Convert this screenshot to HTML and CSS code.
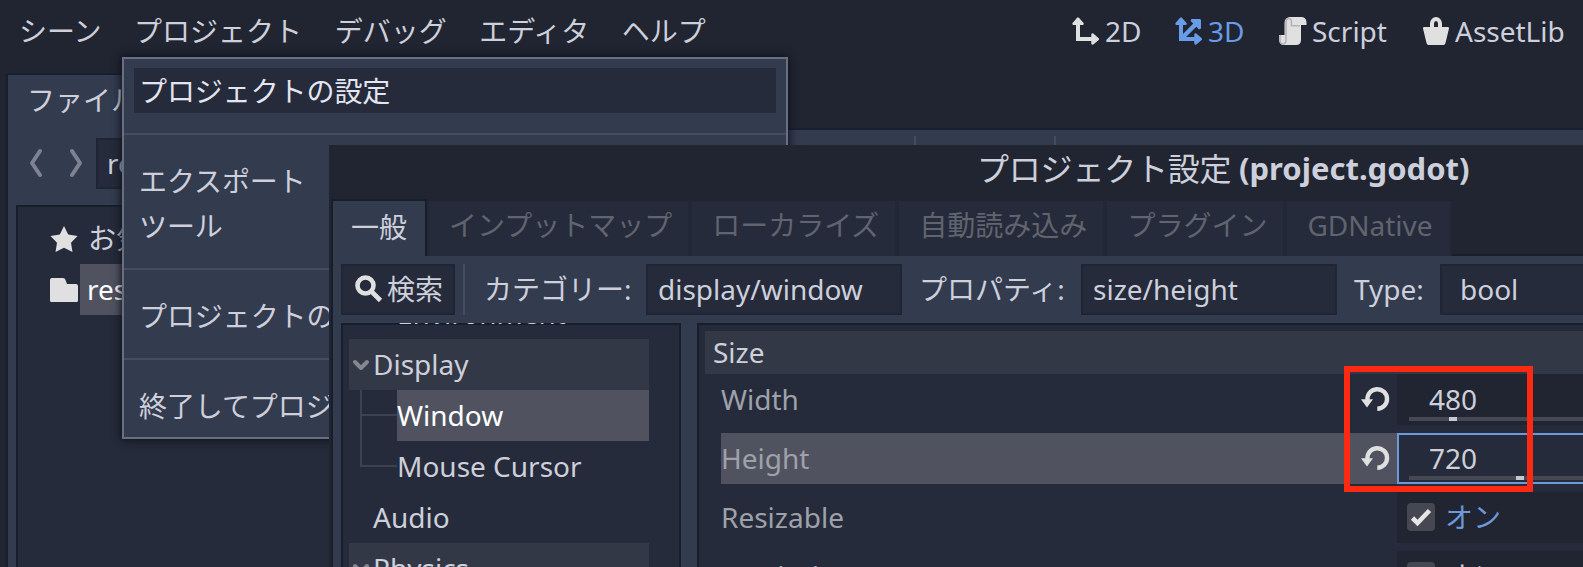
FILE: index.html
```html
<!DOCTYPE html>
<html lang="ja">
<head>
<meta charset="utf-8">
<title>プロジェクト設定</title>
<link rel="stylesheet" href="styles.css">
</head>
<body>
<div class="editor">
  <header class="topbar">
    <nav class="menus">
      <span>シーン</span><span>プロジェクト</span><span>デバッグ</span><span>エディタ</span><span>ヘルプ</span>
    </nav>
    <nav class="modes">
      <span class="mode mode-2d"><svg class="icon" viewBox="0 0 28 28"><path d="M4 8H0.8L0.3 6.3L5.3 0.6H6.7L11.8 6.3L11.3 8H8V20H19.3V16.8L21 16.3L27 21.5V22.8L21 27.7L19.3 27.2V24H4z"/></svg>2D</span>
      <span class="mode mode-3d"><svg class="icon" viewBox="0 0 28 28"><path d="M4 8H0.8L0.3 6.3L5.3 0.6H6.7L11.8 6.3L11.3 8H8V17L18.3 6.6L15.6 4L16.4 2H25L26 3V11.6L24 12.4L21.3 9.7L11 20H19.3V16.8L21 16.3L27 21.5V22.8L21 27.7L19.3 27.2V24H4z"/></svg>3D</span>
      <span class="mode mode-script"><svg class="icon" viewBox="0 0 28 28"><path d="M10.500 0H22Q27 0 27.500 5V8H22V23Q22 28 17 28H4Q0 27 0 22V18H5.500V6Q5.500 1 10.500 0z"/><path class="fold" d="M7 18V6Q7 1.500 10 1.500Q12.500 1.500 12.500 6V8.700H21M1 18V23Q1 27 4 27Q7 27 7 23V17"/></svg>Script</span>
      <span class="mode mode-assets"><svg class="icon" viewBox="0 0 28 28"><path fill-rule="evenodd" d="M8 10V6.500A6 6.500 0 0 1 20 6.500V10H26Q27.300 10 27 11.500L23.500 26Q23 28 21.500 28H6.500Q5 28 4.500 26L1 11.500Q.7 10 2 10zM12 10H16V6.500A2 2.500 0 0 0 12 6.500z"/></svg>AssetLib</span>
    </nav>
  </header>

  <div class="workspace">
    <aside class="dock">
      <div class="dock-tab">ファイルシステム</div>
      <div class="path-row">
        <svg class="arrows" viewBox="0 0 54 30"><path d="M11 3L3 15L11 27M43 3L51 15L43 27"/></svg>
        <div class="path-field">res://</div>
      </div>
      <div class="file-tree">
        <div class="file"><svg class="icon" viewBox="0 0 28 28"><path d="M14 1L18.200 9.500L27.500 11L21 17.800L22.500 27L14 22.800L5.500 27L7 17.800L.5 11L9.800 9.500z"/></svg><span class="file-name">お気に入り:</span></div>
        <div class="file"><svg class="icon" viewBox="0 0 28 28"><path d="M0 4Q0 2 2 2H13Q15 2 15.500 4L17 8H26Q28 8 28 10V24.500Q28 26 26.500 26H1.500Q0 26 0 24.500z"/></svg><span class="file-name picked">res://</span></div>
      </div>
    </aside>
    <section class="viewport"><i></i><i></i></section>
  </div>

  <div class="popup">
    <div class="item hover">プロジェクトの設定</div>
    <div class="rule"></div>
    <div class="item">エクスポート</div>
    <div class="item">ツール</div>
    <div class="rule"></div>
    <div class="item">プロジェクトのデータ</div>
    <div class="rule"></div>
    <div class="item">終了してプロジェクト</div>
  </div>

  <main class="dialog">
    <h1 class="title"><span class="title-jp">プロジェクト設定</span><span class="title-file">(project.godot)</span></h1>
    <div class="tabs">
      <span class="tab active">一般</span><span class="tab">インプットマップ</span><span class="tab">ローカライズ</span><span class="tab">自動読み込み</span><span class="tab">プラグイン</span><span class="tab tab-latin">GDNative</span><span class="tab-rest"></span>
    </div>
    <div class="sheet">
      <div class="toolbar">
        <div class="field search"><svg class="icon" viewBox="0 0 28 28"><circle cx="10.500" cy="10.500" r="8"/><path d="M16.500 16.500L25.500 25.500"/></svg>検索</div>
        <div class="divider"></div>
        <span class="caption cap-category">カテゴリー:</span>
        <div class="field entry">display/window</div>
        <span class="caption cap-property">プロパティ:</span>
        <div class="field entry">size/height</div>
        <span class="caption cap-type">Type:</span>
        <div class="field select">bool</div>
      </div>
      <div class="panes">
        <div class="pane sections">
          <div class="row leaf">Environment</div>
          <div class="row group"><svg class="chevron" viewBox="0 0 16 10"><path d="M2 2L8 8L14 2"/></svg>Display</div>
          <div class="children">
            <div class="guides"><i></i><i></i></div>
            <div class="leaves"><div class="row current">Window</div><div class="row">Mouse Cursor</div></div>
          </div>
          <div class="row top">Audio</div>
          <div class="row group"><svg class="chevron" viewBox="0 0 16 10"><path d="M2 2L8 8L14 2"/></svg>Physics</div>
        </div>
        <div class="pane inspector">
          <div class="heading">Size</div>
          <div class="property">
            <span class="label">Width</span>
            <svg class="revert" viewBox="0 0 28 25"><path class="arc" d="M6.500 13A9.800 9.800 0 1 1 16.300 21.800"/><path d="M0 12.200H12L6 20.400z"/></svg>
            <div class="value number">480<div class="track"><i style="left:40px"></i></div></div>
          </div>
          <div class="property lit">
            <span class="label">Height</span>
            <svg class="revert" viewBox="0 0 28 25"><path class="arc" d="M6.500 13A9.800 9.800 0 1 1 16.300 21.800"/><path d="M0 12.200H12L6 20.400z"/></svg>
            <div class="value number focus">720<div class="track"><i style="left:107px"></i></div></div>
          </div>
          <div class="property">
            <span class="label">Resizable</span>
            <div class="value toggle on"><svg class="check" viewBox="0 0 28 28"><path d="M5.500 15L10.500 20L22.500 7.500"/></svg>オン</div>
          </div>
          <div class="property">
            <span class="label">Borderless</span>
            <div class="value toggle"><svg class="check" viewBox="0 0 28 28"></svg>オン</div>
          </div>
        </div>
      </div>
    </div>
  </main>

  <div class="marker"></div>
</div>
</body>
</html>
```

FILE: styles.css
```css
* { box-sizing: border-box; }
body { margin: 0; background: #202531; }
.editor {
  position: relative; width: 1583px; height: 567px; overflow: hidden;
  display: flex; flex-direction: column;
  background: #202531; color: #cdcfdb;
  font: 28px/45px "Noto Sans", "Noto Sans CJK JP", sans-serif;
  white-space: nowrap;
}
svg { display: block; flex: none; overflow: visible; }
.icon { width: 28px; height: 28px; fill: #e0e0e0; }

.topbar { display: flex; justify-content: space-between; height: 73px; padding: 9px 0 0 19px; }
.menus { display: flex; gap: 32.500px; }
.modes { display: flex; width: 511px; }
.mode { display: flex; flex: none; gap: 5px; height: 45px; }
.mode .icon { margin-top: 8px; }
.mode-2d { width: 103px; }
.mode-3d { width: 104px; color: #699ce8; }
.mode-3d .icon { fill: #699ce8; }
.mode-script { width: 143px; }
.mode-assets { width: 145px; }
.fold { fill: none; stroke: #b4b4b6; stroke-width: 1.6; }

.workspace { display: flex; flex: 1; padding-left: 6px; }
.dock {
  display: flex; flex-direction: column; width: 400px; flex: none;
  background: #333b4f; border: 2px solid #1a1f2d; border-bottom: 0;
  padding-left: 8px;
}
.dock-tab { height: 63px; padding: 3px 0 0 11px; }
.path-row { display: flex; height: 67px; padding-left: 13px; }
.arrows { width: 54px; height: 30px; margin: 10px 13px 0 0; fill: none; stroke: #7d8393; stroke-width: 4; stroke-linecap: round; stroke-linejoin: round; }
.path-field { flex: 1; height: 51px; line-height: 47px; background: #252b3a; border: 2px solid #1f2533; padding-left: 9px; }
.file-tree { flex: 1; background: #252b3a; border: 2px solid #191e2b; border-bottom: 0; padding: 6px 0 0 32px; }
.file { display: flex; align-items: center; height: 51px; }
.file-name { width: 290px; padding-left: 10px; line-height: 51px; }
.picked { margin-left: 2px; padding-left: 7px; background: #50535f; color: #fff; }
.viewport {
  display: flex; flex: 1; margin-top: 55px; padding: 6px 0 0 508px; gap: 138px;
  background: #333b4f; border-top: 2px solid #1a1f2d;
}
.viewport i { flex: none; width: 2px; background: #454c60; }

.popup {
  position: absolute; left: 122px; top: 57px; width: 666px; height: 382px;
  padding-top: 9px; background: #333b4f; border: 2px solid #6a6f80;
  box-shadow: 0 0 8px 1px #0f111c;
}
.item { height: 45px; line-height: 46px; margin: 0 10px; padding-left: 5px; letter-spacing: -.08px; }
.hover { background: #252b3a; color: #e3e5f0; }
.rule { height: 45px; padding-top: 20px; }
.rule::before { content: ""; display: block; height: 2px; background: #464d60; }

.dialog { position: absolute; left: 329px; top: 145px; width: 1254px; height: 422px; display: flex; flex-direction: column; background: #202531; }
.title { flex: none; display: flex; height: 54px; margin: 0; padding-left: 648px; font-size: 31px; line-height: 47px; }
.title-jp { flex: none; width: 262px; font-weight: 400; font-size: 32px; letter-spacing: -.2px; }
.title-file { font-weight: 700; }
.tabs { flex: none; display: flex; height: 57px; padding-left: 2px; }
.tab { flex: none; height: 55px; margin: 2px 4px 0 0; padding: 0 16px 0 20px; line-height: 49px; background: #252b3a; color: #60646f; box-shadow: 2px 0 #212735, -2px 0 #212735; }
.tab.active { height: 57px; margin: 0 2px 0 0; padding: 0 18px; line-height: 53px; border: 2px solid #191e2b; border-bottom: 0; background: #333b4f; color: #cdcfdb; box-shadow: none; }
.tab-latin { width: 163px; margin-right: 2px; padding: 0 0 0 20px; }
.tab-rest { flex: 1; border-bottom: 2px solid #191e2b; }
.sheet { flex: 1; display: flex; flex-direction: column; gap: 8px; margin-left: 2px; padding: 8px 0 0 8px; border-left: 2px solid #191e2b; background: #333b4f; }
.toolbar { flex: none; display: flex; height: 51px; line-height: 51px; }
.field { flex: none; height: 51px; line-height: 47px; background: #252b3a; border: 2px solid #1f2533; }
.search { display: flex; gap: 4px; width: 114px; padding-left: 12px; }
.search .icon { margin-top: 9px; fill: none; stroke: #e0e0e0; stroke-width: 4.6; }
.divider { flex: none; width: 2px; margin: 0 19px 0 8px; background: #464d60; }
.caption { flex: none; }
.cap-category { width: 162px; }
.entry { width: 256px; padding-left: 10px; }
.cap-property { width: 179px; padding-left: 17px; }
.cap-type { width: 103px; padding-left: 17px; }
.select { width: 143px; border-right: 0; padding-left: 18px; }

.panes { flex: 1; display: flex; gap: 16px; }
.pane { background: #252b3a; box-shadow: inset 2px 2px #191e2b, inset -2px 0 #191e2b; height: 244px; overflow: hidden; flex: none; }
.sections { width: 340px; padding: 0 32px 0 8px; }
.row { height: 51px; line-height: 51px; }
.sections > .leaf { margin-top: -35px; padding-left: 48px; }
.group { display: flex; align-items: center; gap: 4px; padding-left: 4px; background: #333846; }
.chevron { width: 16px; height: 10px; fill: none; stroke: #84878f; stroke-width: 4; stroke-linecap: round; stroke-linejoin: round; }
.children { display: flex; }
.guides { width: 48px; height: 102px; padding-left: 11px; }
.guides i { display: block; border-left: 2px solid #3d4250; border-bottom: 2px solid #3d4250; height: 51px; }
.guides i:first-child { height: 26px; }
.leaves { flex: 1; }
.current { background: #50535f; color: #fff; }
.top { padding-left: 24px; }

.inspector { width: 888px; display: flex; flex-direction: column; padding: 8px 2px 0 8px; }
.heading { flex: none; height: 43px; line-height: 42px; padding-left: 8px; background: #333846; }
.property { flex: none; display: flex; height: 51px; margin: 0 0 8px 16px; line-height: 51px; }
.label { flex: 1; color: #9fa1aa; }
.lit { background: #50535f; }
.revert { width: 28px; height: 25px; margin: 13px 8px 0 0; fill: #e0e0e0; }
.arc { fill: none; stroke: #e0e0e0; stroke-width: 4.400; }
.value { flex: none; position: relative; width: 186px; background: #202531; }
.number { padding-left: 32px; }
.focus { background: #252b3a; box-shadow: inset 2px 2px #6d98da, inset 0 -2px #6d98da; }
.track { position: absolute; left: 12px; right: 0; top: 43px; height: 4px; background: #464954; }
.track i { position: absolute; top: 0; width: 8px; height: 4px; background: #c6c8d3; }
.toggle { display: flex; gap: 10px; padding-left: 10px; }
.on { color: #6d98da; }
.check { width: 28px; height: 28px; margin-top: 11px; border-radius: 4px; background: #454852; fill: none; stroke: #e6e6e6; stroke-width: 4.600; }

.marker { position: absolute; left: 1344px; top: 366px; width: 189px; height: 126px; border: 6px solid #fb2a10; }
```
